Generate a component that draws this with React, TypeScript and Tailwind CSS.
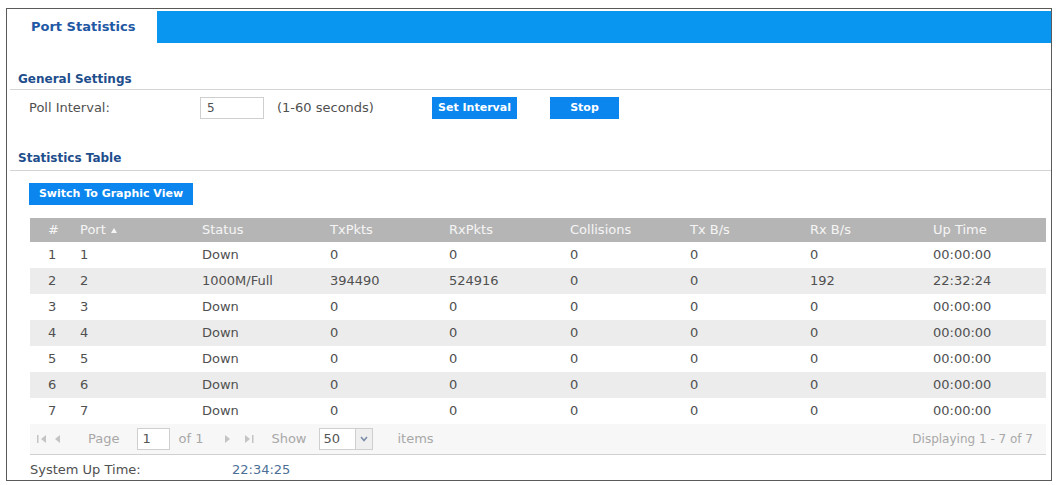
import React from "react";

const cols = "grid grid-cols-[42px_122px_128px_119px_121px_120px_120px_123px_1fr]";

const rows: string[][] = [
  ["1", "1", "Down", "0", "0", "0", "0", "0", "00:00:00"],
  ["2", "2", "1000M/Full", "394490", "524916", "0", "0", "192", "22:32:24"],
  ["3", "3", "Down", "0", "0", "0", "0", "0", "00:00:00"],
  ["4", "4", "Down", "0", "0", "0", "0", "0", "00:00:00"],
  ["5", "5", "Down", "0", "0", "0", "0", "0", "00:00:00"],
  ["6", "6", "Down", "0", "0", "0", "0", "0", "00:00:00"],
  ["7", "7", "Down", "0", "0", "0", "0", "0", "00:00:00"],
];

function PagerArrow({ dir, bar }: { dir: "l" | "r"; bar?: boolean }) {
  return (
    <svg width="12" height="10" viewBox="0 0 12 10" className="text-[#c4c4c4]">
      {dir === "l" ? (
        <>
          {bar && <rect x="1" y="1" width="1.5" height="8" fill="currentColor" />}
          <polygon points="10,1 10,9 5,5" fill="currentColor" />
        </>
      ) : (
        <>
          <polygon points="2,1 2,9 7,5" fill="currentColor" />
          {bar && <rect x="9" y="1" width="1.5" height="8" fill="currentColor" />}
        </>
      )}
    </svg>
  );
}

function Heading({ children, pb }: { children: React.ReactNode; pb: string }) {
  return (
    <div className={`ml-[3px] pl-[8px] ${pb} border-b border-[#d4d4d4] text-[12px] leading-[16px] font-bold text-[#1e4e8c]`}>
      {children}
    </div>
  );
}

export default function App() {
  return (
    <div className="w-[1056px] h-[485px] bg-white pt-[8px] pl-[6px] pr-[4px] font-['DejaVu_Sans',sans-serif] text-[#505050]">
      <div className="h-[473px] border border-[#5a5a5a]">
        {/* tab strip */}
        <div className="flex h-[34px]">
          <div className="w-[150px] pl-[24px] pt-[2px] flex items-center text-[13px] font-bold text-[#1f58a4]">
            Port Statistics
          </div>
          <div className="flex-1 mt-[2px] bg-[#0896f0]" />
        </div>

        {/* General Settings */}
        <div className="mt-[28px]">
          <Heading pb="pb-[2px]">General Settings</Heading>
        </div>
        <div className="flex items-center mt-[7px] h-[22px] text-[13px]">
          <span className="pl-[22px] w-[193px]">Poll Interval:</span>
          <div className="w-[64px] h-[22px] border border-[#cfcfcf] pl-[6px] flex items-center text-[12px]">
            5
          </div>
          <span className="ml-[13px] w-[155px]">(1-60 seconds)</span>
          <button className="w-[85px] h-[22px] bg-[#0a86ee] text-white text-[11px] font-bold">
            Set Interval
          </button>
          <button className="ml-[33px] w-[69px] h-[22px] bg-[#0a86ee] text-white text-[11px] font-bold">
            Stop
          </button>
        </div>

        {/* Statistics Table */}
        <div className="mt-[31px]">
          <Heading pb="pb-[4px]">Statistics Table</Heading>
        </div>
        <div className="mt-[12px] ml-[22px] flex">
          <button className="w-[164px] h-[22px] bg-[#0a86ee] text-white text-[11px] font-bold">
            Switch To Graphic View
          </button>
        </div>

        <div className="mt-[13px] ml-[23px] mr-[5px] text-[13px]">
          <div className={`${cols} h-[24px] items-center bg-[#b5b5b5] text-[#f5f5f5]`}>
            <div className="pl-[18px]">#</div>
            <div className="pl-2 flex items-center gap-[5px]">
              Port
              <svg width="6" height="5" viewBox="0 0 6 5">
                <polygon points="3,0 6,5 0,5" fill="#f5f5f5" />
              </svg>
            </div>
            <div className="pl-2">Status</div>
            <div className="pl-2">TxPkts</div>
            <div className="pl-2">RxPkts</div>
            <div className="pl-2">Collisions</div>
            <div className="pl-2">Tx B/s</div>
            <div className="pl-2">Rx B/s</div>
            <div className="pl-2">Up Time</div>
          </div>
          {rows.map((r, i) => (
            <div
              key={r[0]}
              className={`${cols} h-[26px] items-center ${i % 2 === 1 ? "bg-[#ececec]" : "bg-white"}`}
            >
              {r.map((c, j) => (
                <div key={j} className={j === 0 ? "pl-[18px]" : "pl-2"}>
                  {c}
                </div>
              ))}
            </div>
          ))}
          {/* pager */}
          <div className="h-[31px] flex items-center bg-[#f7f7f7] border-b border-[#d0d0d0] text-[#a8a8a8] text-[13px] pl-[6px] pr-[13px]">
            <PagerArrow dir="l" bar />
            <span className="ml-[2px]">
              <PagerArrow dir="l" />
            </span>
            <span className="ml-[26px]">Page</span>
            <div className="ml-[18px] w-[33px] h-[22px] bg-white border border-[#cfcfcf] pl-[4px] flex items-center text-[#555]">
              1
            </div>
            <span className="ml-[8px]">of 1</span>
            <span className="ml-[20px]">
              <PagerArrow dir="r" />
            </span>
            <span className="ml-[8px]">
              <PagerArrow dir="r" bar />
            </span>
            <span className="ml-[16px]">Show</span>
            <div className="ml-[12px] w-[54px] h-[22px] bg-white border border-[#cfcfcf] flex items-center text-[#555]">
              <span className="pl-[4px] flex-1">50</span>
              <span className="w-[17px] h-full border-l border-[#cfcfcf] bg-[#efefef] flex items-center justify-center">
                <svg width="8" height="6" viewBox="0 0 8 6">
                  <polyline points="1,1 4,4.5 7,1" fill="none" stroke="#7a8ea8" strokeWidth="1.6" />
                </svg>
              </span>
            </div>
            <span className="ml-[25px]">items</span>
            <span className="ml-auto text-[12px]">Displaying 1 - 7 of 7</span>
          </div>
        </div>

        <div className="flex items-center mt-[7px] ml-[23px] text-[13px] leading-[16px]">
          <span className="w-[202px]">System Up Time:</span>
          <span className="text-[#4d6f96]">22:34:25</span>
        </div>
      </div>
    </div>
  );
}
